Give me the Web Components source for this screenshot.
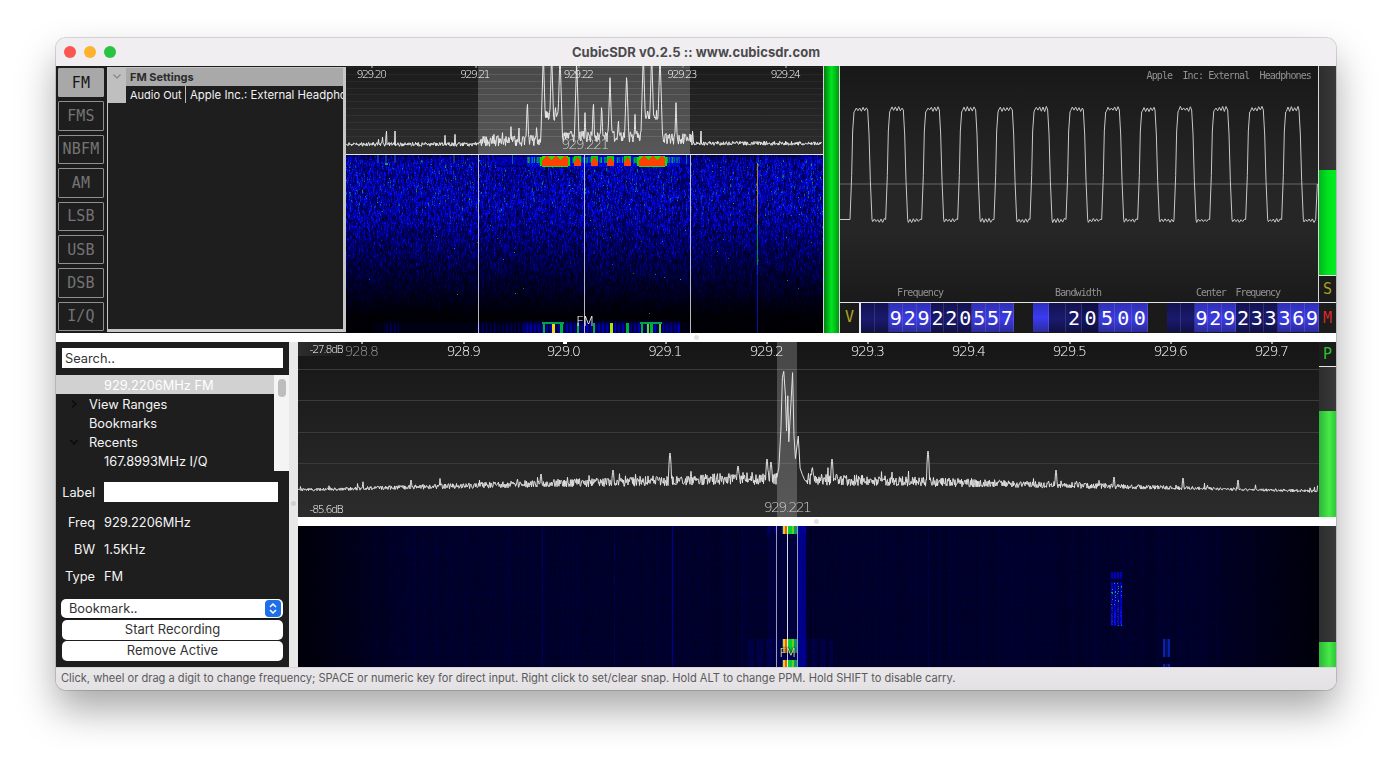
<!DOCTYPE html>
<html lang="en"><head><meta charset="utf-8"><title>CubicSDR</title>
<style>
html,body{margin:0;height:100%;background:#fff;overflow:hidden}
body{padding:38px 0 0 56px;box-sizing:border-box;font-family:Inter,"Liberation Sans",sans-serif}
</style></head><body>
<sdr-window>
  <top-row slot="top"></top-row>
  <bottom-row slot="bottom"></bottom-row>
</sdr-window>
<script>
function rng(seed){let s=seed>>>0;return()=>{s=(s+0x6D2B79F5)>>>0;let t=s;t=Math.imul(t^t>>>15,t|1);t^=t+Math.imul(t^t>>>7,t|61);return((t^t>>>14)>>>0)/4294967296}}
const GL='"DejaVu Sans",sans-serif',MONO='"DejaVu Sans Mono",monospace',UI='Inter,"Liberation Sans",sans-serif';
class Base extends HTMLElement{
  constructor(){super();this.attachShadow({mode:'open'})}
  html(s){this.shadowRoot.innerHTML=s}
}
class SdrWindow extends Base{connectedCallback(){this.html(`<style>
:host{display:flex;flex-direction:column;width:1280px;height:652px;border-radius:10px;overflow:hidden;background:#fff;
box-shadow:0 0 0 1px rgba(0,0,0,.14),0 20px 38px rgba(0,0,0,.34)}
.t{flex:0 0 28px;background:#f0eef1;position:relative;display:flex;align-items:center;justify-content:center;color:#4b4a4d;font:700 13px ${UI};letter-spacing:.06px}
.l{position:absolute;left:8px;top:8px;display:flex;gap:8px}
.l i{width:12px;height:12px;border-radius:50%;display:block}
.s{flex:0 0 9px;background:#fff;display:flex;align-items:center;justify-content:center}
.s i{width:5px;height:5px;border-radius:50%;background:#e2e2e2;display:block}
.st{flex:0 0 23px;background:linear-gradient(#e9e7e9,#e3e1e3);color:#5b5a5c;font:400 11.080px/22px ${UI};padding-left:5px;white-space:nowrap;box-shadow:inset 0 1px 0 #d8d6d8}
</style>
<div class="t"><div class="l"><i style="background:#fc5450"></i><i style="background:#fdb32e"></i><i style="background:#28c33f"></i></div>CubicSDR v0.2.5 :: www.cubicsdr.com</div>
<slot name="top"></slot><div class="s"><i></i></div><slot name="bottom"></slot>
<div class="st">Click, wheel or drag a digit to change frequency; SPACE or numeric key for direct input. Right click to set/clear snap. Hold ALT to change PPM. Hold SHIFT to disable carry.</div>`)}}
class TopRow extends Base{connectedCallback(){this.html(`<style>
:host{display:grid;grid-template-columns:51px 239px 477px 17px 479px 17px;height:267px;background:#1c1c1c}
.m{display:flex;flex-direction:column;padding:2px 3px 2px 2px;gap:4px;background:#1c1c1c}
.d{display:flex;flex-direction:column;min-width:0}
.d .sep{height:1px;background:#e6e6e6;flex:none}
.sc{display:flex;flex-direction:column;min-width:0}
</style>
<div class="m">${['FM','FMS','NBFM','AM','LSB','USB','DSB','I/Q'].map((m,i)=>`<mode-button ${i?'':'active'}>${m}</mode-button>`).join('')}</div>
<settings-panel></settings-panel>
<div class="d"><spectrum-view variant="demod"></spectrum-view><div class="sep"></div><waterfall-view variant="demod"></waterfall-view></div>
<level-meter kind="big"></level-meter>
<div class="sc"><scope-view></scope-view><tuner-row></tuner-row></div>
<side-col></side-col>`)}}
class ModeButton extends Base{connectedCallback(){const a=this.hasAttribute('active');this.html(`<style>
:host{display:flex;flex:1 1 0;min-height:0;align-items:center;justify-content:center;box-sizing:border-box;border:1px solid ${a?'#a8a8a8':'#8f8f8f'};
background:${a?'#a8a8a8':'#1e1e1e'};color:${a?'#161616':'#747474'};font:15px ${MONO};letter-spacing:.2px;border-radius:1px;white-space:nowrap}
</style><slot></slot>`)}}
class SettingsPanel extends Base{connectedCallback(){this.html(`<style>
:host{display:flex;flex-direction:column;background:#1e1e1e;border:1px solid #c6c6c6;border-right-width:3px;border-bottom-width:3px;margin:1px 0;box-sizing:border-box;font:11px ${UI};overflow:hidden}
.h{display:grid;grid-template-columns:18px 1fr;grid-template-rows:18px 17px;background:#bfbfbf}
.c{grid-row:1/3;display:flex;justify-content:center;padding-top:5px;box-sizing:border-box}
.ti{background:#a9a9a9;color:#2c2c2c;font-weight:700;padding-left:4px;line-height:18px}
.r{display:flex;background:#1e1e1e;color:#f2f2f2;line-height:18px;white-space:nowrap;overflow:hidden}
.k{padding:0 3px 0 4px;border-right:1px solid #bbb;width:52px;flex:none}
.v{padding-left:4px;font-size:11.400px}
.b{flex:1}
</style><div class="h"><div class="c"><svg width="10" height="7" viewBox="0 0 10 7"><path d="M1.500 1.500 5 5l3.500-3.500" fill="none" stroke="#8a8a8a" stroke-width="1.400"/></svg></div><div class="ti">FM Settings</div><div class="r"><div class="k">Audio Out</div><div class="v">Apple Inc.: External Headphones</div></div></div><div class="b"></div>`)}}
function demodFloor(px){return px<400?235:px<590?225:px<650?150:px<890?212:px<950?150:px<1040?218:232}
const demodSpikes=[[124,180],[112,198],[150,195],[100,205],[330,205],[300,208],[447,205],[472,185],[498,182],[522,186],[547,100],[575,170],[595,-40],[620,-40],[645,-40],[632,110],[695,-20],[720,140],[745,100],[770,110],[795,35],[820,150],[845,20],[870,145],[895,-40],[920,-40],[945,-40],[908,120],[993,110],[1043,180],[1068,195],[1235,215]];
const mainSpikes=[[411,480,1],[541,474,1],[613,470,1],[670,453,.8],[738,466,1.200],[767,459,.8],[771,462,1],[832,459,.8],[928,451,.7],[1056,470,.8],[1114,477,1],[1183,478,1],[1238,480,1]];
const mainPeak=[[776.700,478],[779,467],[781,432],[782.300,378],[784,372],[785.300,395],[786.300,432],[787.700,395],[789,442],[790.700,402],[792.700,372],[794,435],[795.700,458],[798.300,437],[800,468],[802.300,475],[804.500,480],[807,482]];
class SpectrumView extends Base{connectedCallback(){const demod=this.getAttribute('variant')=='demod';
 const w=demod?477:1021,h=demod?88:175;
 const labels=demod?[['929.20',25],['929.21',128.500],['929.22',232],['929.23',335.500],['929.24',439]]:[['928.8',63],['928.9',165],['929.0',265],['929.1',366.500],['929.2',468],['929.3',569],['929.4',670],['929.5',771],['929.6',872],['929.7',973]];
 this.html(`<style>
:host{display:block;position:relative;width:${w}px;height:${h}px;flex:none;overflow:hidden;background:${demod?'linear-gradient(#1b1b1b,#2e2e2e)':'linear-gradient(#161616,#2c2c2c)'}}
canvas{position:absolute;left:0;top:0}
.l{position:absolute;transform:translateX(-50%);font-family:${GL};font-weight:200;white-space:nowrap;color:#fff}
.t{font-size:${demod?11:14}px;letter-spacing:${demod?-1.6:-1.4}px;top:${demod?3:1}px;line-height:${demod?12:17}px}
.u{font-size:14px;letter-spacing:-1.600px;color:#cfcfcf;line-height:16px}
.d{font-size:11px;letter-spacing:-1.400px;left:28px;line-height:12px;color:#fff}
.box{position:absolute;left:0;top:0;width:48px;height:14px;background:linear-gradient(90deg,#2d2d2d,#1a1a1a)}
</style><canvas width="${w}" height="${h}"></canvas>
${demod?'':'<div class="box"></div>'}
${labels.map((l,i)=>`<div class="l t" style="left:${l[1]}px${(!demod&&i==0)?';color:#9a9a9a':''}">${l[0]}</div>`).join('')}
<div class="l u" style="left:${demod?238.500:489}px;top:${demod?70:157}px">929.221</div>
${demod?'':'<div class="l d" style="top:2px">-27.8dB</div><div class="l d" style="top:162px">-85.6dB</div>'}`);
 const c=this.shadowRoot.querySelector('canvas').getContext('2d');const R=rng(demod?11:29);
 if(demod){
   c.fillStyle='rgba(255,255,255,.05)';for(let y=1;y<75;y+=6.85)c.fillRect(0,Math.round(y),w,1);
   c.fillStyle='rgba(255,255,255,.2)';c.fillRect(132,0,212,h);
   c.fillStyle='rgba(255,255,255,.06)';for(let y=1;y<75;y+=6.85)c.fillRect(132,Math.round(y),212,1);
   c.fillStyle='#777';labels.forEach(l=>c.fillRect(Math.round(l[1]),0,2,2));
   c.strokeStyle='#e8e8e8';c.lineWidth=1;c.beginPath();
   for(let x=0;x<w-1;x+=.5){const px=(x+1)*3;const f=demodFloor(px);const inb=px>400&&px<1040;
     let y=f+(R()-.5)*(inb?34:12);
     for(const s of demodSpikes){const dx=Math.abs(px-s[0]);const sy=s[1]+dx*(s[1]<0?34:30);if(sy<y)y=sy}
     y=y/3;x==0?c.moveTo(x,y):c.lineTo(x,y)}
   c.stroke();
 } else {
   c.fillStyle='#3a3a3a';[26.500,58,89.500,121].forEach(y=>c.fillRect(0,Math.round(y),w,1));
   c.fillStyle='rgba(255,255,255,.21)';c.fillRect(479,0,20,h);
   c.fillStyle='#999';labels.forEach(l=>c.fillRect(Math.round(l[1]),0,2,2));
   c.fillStyle='#fff';c.fillRect(265,0,4,2);
   const floor=x=>{const X=x+298;if(X<762)return 490-12*((X-298)/464);return 478+(X-762)*(13/548)};
   const Q=rng(29);c.strokeStyle='rgb(226,226,226)';c.lineWidth=1;c.beginPath();let started=false;
   for(let x=0;x<w-1;x+=.5){const X=x+298;
     if(X>776.700&&X<807){if(X-.5<=776.700){for(const p of mainPeak){c.lineTo(p[0]-298+(Q()-.5)*.6,p[1]-342+(Q()-.5)*2)}}continue}
     const t=Math.max(0,1-Math.abs(X-770)/440);const a=3+10*t;
     let y=floor(x)-342+(Q()-.5)*a;
     if(Q()<.03)y-=2+Q()*(3+6*t);
     for(const s of mainSpikes){const dx=Math.abs(X-s[0]);const sy=s[1]-342+dx*dx*9/s[2];if(sy<y)y=sy}
     if(X>807&&X<815){const sy=124+Math.abs(X-812.300)*8;if(sy<y)y=sy}
     if(!started){c.moveTo(x,y);started=true}else c.lineTo(x,y)}
   c.stroke();
 }
}}
function palette(v){v=Math.max(0,Math.min(1,v));if(v<.3)return[0,0,Math.round(v/.3*255)];if(v<.55){const t=(v-.3)/.25;return[0,Math.round(t*220),Math.round(255*(1-t))]}if(v<.75){const t=(v-.55)/.2;return[Math.round(t*255),220+Math.round(t*20),0]}const t=(v-.75)/.25;return[255,Math.round(240*(1-t)+30*t),0]}
class WaterfallView extends Base{connectedCallback(){const demod=this.getAttribute('variant')=='demod';const w=demod?477:1021,h=demod?178:141;
 this.html(`<style>
:host{display:block;position:relative;width:${w}px;height:${h}px;flex:none;overflow:hidden;background:#000}
canvas{display:block}
.f{position:absolute;transform:translateX(-50%);font-family:${GL};font-weight:200;color:#fff;white-space:nowrap;letter-spacing:-1.500px;font-size:${demod?14:13}px;line-height:14px;text-shadow:${demod?'none':'0 0 1px #000,0 0 2px #000,0 0 3px #000'}}
</style><canvas width="${w}" height="${h}"></canvas><div class="f" style="left:${demod?238.500:489}px;top:${demod?159:120}px">FM</div>`);
 const c=this.shadowRoot.querySelector('canvas').getContext('2d');const id=c.createImageData(w,h),D=id.data,R=rng(demod?77:5);
 if(demod){
   const grid=[];for(let y=0;y<h+4;y++){grid[y]=[];for(let x=0;x<w;x++)grid[y][x]=R()}
   const col=[];for(let x=0;x<w;x++)col[x]=.92+R()*.16;
   for(let y=0;y<h;y++)for(let x=0;x<w;x++){
     const ph=(x*7)%5;
     const a=grid[(y+ph)>>2][x],b=grid[((y+1)>>1)+2][(x+1)%w],e=grid[y][x];
     const fade=y<6?.6+y*.07:y<50?1:Math.max(.03,Math.pow(Math.max(0,1-(y-50)/118),1.2));
     const n=(a*.5+b*.25+e*.25)*col[x];
     let v=fade*(.05+.3*n*n*1.3+.06*n);let rgb=palette(v);
     if(rgb[2]>150&&R()<.3)rgb=[12,12,rgb[2]];
     if(R()<.0016*fade&&y>8){rgb=[0,120+R()*70,70]}
     const i=(y*w+x)*4;D[i]=rgb[0];D[i+1]=rgb[1];D[i+2]=rgb[2];D[i+3]=255}
   c.putImageData(id,0,0);
   // top signal band
   const blocks=[[196,221],[293,318]],teeth=[231,248,264,281];
   const cs=[];for(let x=0;x<w;x++)cs[x]=R();
   for(let x=150;x<345;x++){for(let y=0;y<12;y++){
     let v;
     if(x<181||x>333){v=(R()<.5?.12:.2)+R()*.08;if(y<2||y>9)v*=.6;if((x==166||x==340)&&y<9)v=.42}
     else{
       v=.24+.24*cs[x]+R()*.05; if(y<2)v=.14+R()*.12; if(y>=8)v=Math.min(v,.2+R()*.16);
       for(const b of blocks){if(x>=b[0]&&x<=b[1]){const tooth=Math.abs(((x-b[0])%9)-4.5);if(y>=.5+tooth*.9&&y<11)v=.96;else if(y>=1)v=.58}else if(x>=b[0]-2&&x<=b[1]+2&&y<11&&y>1)v=.56}
       for(const p of teeth){const d=Math.abs(x-p);if(y>=2&&d<=Math.min(3,(y-1)/2)&&y<11)v=.96;else if(d<=3&&y<11&&y>=1&&v<.54)v=.54}
     }
     const q=palette(v);c.fillStyle=`rgb(${q})`;c.fillRect(x,y,1,1)}}
   // faint peak top left
   for(const x of[32,40,49,108]){c.fillStyle='#0a32a0';c.fillRect(x-1,0,2,8)}
   c.fillStyle='#09a05a';c.fillRect(39,8,3,2);
   // tone line
   for(let y=8;y<120;y++){const q=y<70?(R()<.5?[235,120,0]:[110,160,0]):y<110?[0,140,60]:[0,40,170];c.fillStyle=`rgb(${q})`;c.fillRect(411,y,1,1)}
   c.fillStyle='#0610a8';c.fillRect(411,0,1,8);c.fillRect(411,120,1,58);
   // bottom signal
   for(let x=28;x<345;x++){const st=(x%4<2?1:.4)*(R()*.7+.4);for(let y=165;y<178;y++){const inb=x>=178&&x<=333;let f=inb?(.05+.17*st):(((x>=38&&x<=52)||(x>=130&&x<=178))?.13*st:.025);let v=f*Math.min(1,(y-164)/6);const q=palette(v);c.fillStyle=`rgb(${q})`;c.fillRect(x,y,1,1)}}
   for(const [x,p] of [[197,.5],[206,.78],[214,.5],[231,.5],[247,.5],[264,.68],[280,.5],[295,.5],[301,.62],[304,.5],[313,.62]]){c.fillStyle=`rgb(${palette(p)})`;c.fillRect(x,168,x%2?2:3,10)}
   c.fillStyle='rgb(0,160,70)';c.fillRect(196,167,22,2);c.fillRect(294,167,22,2);
   c.fillStyle='rgba(255,255,255,.72)';[132,238,344].forEach(x=>c.fillRect(x,0,1,h));
 } else {
   const env=x=>{const a=Math.min(1,x/110),b=Math.min(1,(w-x)/120);return .22+.78*a*b};
   const col=[];for(let x=0;x<w;x++)col[x]=(.8+R()*.3);
   for(let x=0;x<w;x+=1){if(R()<.025)col[x]*=1.25}
   for(const [x,a] of [[244,2.000],[316,1.900],[374,3.000],[444,1.700],[630,1.700],[117,1.300],[210,1.400]])col[x]=a;
   for(let y=0;y<h;y++){const rowk=.92+R()*.16;for(let x=0;x<w;x++){
     let b=env(x)*col[x]*(.82+R()*.36)*rowk*46;
     const i=(y*w+x)*4;D[i]=0;D[i+1]=0;D[i+2]=Math.min(255,b);D[i+3]=255}}
   c.putImageData(id,0,0);
   c.fillStyle='rgba(0,0,200,.55)';c.fillRect(500,0,8,h);
   c.fillStyle='rgba(0,0,170,.12)';c.fillRect(470,0,38,h);
   for(let y=113;y<141;y++)for(let x=450;x<535;x++){if(R()<.9&&(x%9<6)){c.fillStyle=`rgba(0,0,${130+R()*90|0},.22)`;c.fillRect(x,y,1,1)}}
   for(let y=0;y<8;y++)for(let x=468;x<510;x++){if(x%7<4){c.fillStyle=`rgba(0,0,220,.25)`;c.fillRect(x,y,1,1)}}
   const sig=(Y,H)=>{for(let x=484;x<499;x++){let q;const X=x-484;if(X<1)q=[0,60,170];else if(X<3)q=[255,200,0];else if(X<5)q=[235,100,0];else if(X<10)q=[0,210,50];else if(X<12)q=[110,205,20];else q=[0,150,110];c.fillStyle=`rgb(${q})`;c.fillRect(x,Y,1,H)}};
   sig(0,8);sig(113,14);sig(134,7);
   c.fillStyle='rgb(0,0,90)';c.fillRect(484,127,15,7);
   for(let y=46;y<100;y++)for(let x=813;x<825;x++){if(y>=53&&y<56)continue;let r=R();const e=(x-813)%3;
     let q=e==2?[0,0,60]:(y>80&&y<99&&r<.5)?[10,20,225]:(y>56&&r<.12)?[0,160,110]:[0,0,150+R()*80|0];
     c.fillStyle=`rgb(${q})`;c.fillRect(x,y,1,1)}
   for(const [Y,H] of [[113,18],[138,3]]){c.fillStyle='#0a22a8';c.fillRect(865,Y,2,H);c.fillRect(870,Y,2,H);c.fillStyle='#000f60';c.fillRect(867,Y,3,H)}
   c.fillStyle='rgba(255,255,255,.85)';c.fillRect(489,0,1,h);c.fillStyle='rgba(255,255,255,.6)';c.fillRect(478,0,1,h);c.fillRect(499,0,1,h);
 }
}}
class LevelMeter extends Base{connectedCallback(){const k=this.getAttribute('kind');const top=this.getAttribute('level')||'0';
 const fill=k=='big'?'linear-gradient(90deg,#007f10,#00e41f 50%,#009612)':k=='soft'?'linear-gradient(90deg,#2bb53a,#46ea46 60%,#2fc83c)':'linear-gradient(90deg,#00b51c,#00e21f 50%,#00ee20)';
 this.html(`<style>
:host{display:flex;flex-direction:column;min-height:0;box-sizing:border-box;background:linear-gradient(90deg,#2e2e2e,#383838);${k=='big'?'border-left:1px solid #d5d5d5;border-right:1px solid #d5d5d5;':''}}
.e{flex:0 0 ${top}px}.f{flex:1;background:${fill}}
</style><div class="e"></div><div class="f"></div>`)}}
class ScopeView extends Base{connectedCallback(){const w=479,h=236;this.html(`<style>
:host{display:block;position:relative;flex:none;width:${w}px;height:${h}px;background:linear-gradient(#181818,#262626 48%,#262626 70%,#1a1a1a);overflow:hidden;border-right:1px solid #d8d8d8;box-sizing:border-box}
canvas{position:absolute;left:0;top:0}
.x{position:absolute;font:10px ${MONO};letter-spacing:-.88px;color:#929292;white-space:pre;line-height:12px}
</style><canvas width="${w}" height="${h}"></canvas>
<div class="x" style="right:7px;top:4px">Apple  Inc: External  Headphones</div>
<div class="x" style="left:57px;top:221px">Frequency</div><div class="x" style="left:215px;top:221px">Bandwidth</div><div class="x" style="left:356px;top:221px;letter-spacing:-1.080px">Center  Frequency</div>`);
 const c=this.shadowRoot.querySelector('canvas').getContext('2d');const R=rng(3);
 c.fillStyle='#464646';c.fillRect(0,117,w,2);
 c.strokeStyle='#c9c9c9';c.lineWidth=1;c.beginPath();
 const rises=[65,172,280,388,497,605,713,820,928,1037,1144,1252,1360],falls=[118,225,333,442,552,658,765,873,980,1090,1198,1305,1412];
 const hy=43,ly=154.500;
 let last=30;c.moveTo(0,ly-1);
 const rip=(a,b,y,amp)=>{let s=0;for(let p=a;p<b;p+=5){c.lineTo(p/3,y+(s++%2?-amp:amp)*(.4+R()*.8))}};
 rises.forEach((r,i)=>{const f=falls[i];const rr=r-30,ff=f-30;
   rip(last,rr-5,ly,1.800);
   c.lineTo((rr-5)/3,ly-1);c.lineTo((rr)/3,ly-45);c.lineTo((rr+3)/3,hy+22);c.lineTo((rr+7)/3,hy+3);
   rip(rr+9,ff-6,hy,2.200);
   c.lineTo((ff-5)/3,hy+1);c.lineTo((ff-1)/3,hy+25);c.lineTo((ff+3)/3,ly-40);c.lineTo((ff+8)/3,ly-1);
   last=ff+10});
 rip(last,1430,ly,1.800);c.lineTo(1432/3,118);
 c.stroke();
}}
class TunerRow extends Base{connectedCallback(){
 const cell=(d,cls)=>`<digit-cell ${cls}>${d}</digit-cell>`;
 const grp=(arr)=>arr.map(([d,c])=>cell(d,c)).join('');
 const f=[['','n'],['','n'],['9','b'],['2','b'],['9','b'],['2','n'],['2','n'],['0','n'],['5','b'],['5','b'],['7','b']];
 const bw=[['','h'],['','n'],['2','n'],['0','d'],['5','b'],['0','b'],['0','b']];
 const ce=[['','n'],['','n'],['9','b'],['2','b'],['9','b'],['2','n'],['3','n'],['3','n'],['3','b'],['6','b'],['9','b']];
 this.html(`<style>
:host{display:flex;flex:none;height:31px;border-top:1px solid #e6e6e6;background:#1a1a1a;box-sizing:border-box;font:20px ${MONO};color:#fff}
.v{width:21px;box-sizing:border-box;flex:none;border-right:2px solid #e6e6e6;color:#b0a821;font:15px/29px ${MONO};text-align:center}
.g{display:flex;height:29px}
.f{width:153px;flex:none}.bw{width:115px;flex:none}.gap1{width:19px;flex:none}.gap2{width:19px;flex:none}.ce{flex:1;min-width:0}
.g digit-cell{flex:1 1 0;min-width:0}
</style><div class="v">V</div><div class="g f">${grp(f)}</div><div class="gap1"></div><div class="g bw">${grp(bw)}</div><div class="gap2"></div><div class="g ce">${grp(ce)}</div>`)}}
class DigitCell extends Base{connectedCallback(){
 const a=this.attributes;const bg=a.b?'linear-gradient(#2f2fb4,#3b3be2 55%,#2a2a9a)':a.h?'linear-gradient(#2e2ebe,#3a3af2 50%,#2c2c9c)':a.d?'linear-gradient(#0e0e42,#14145e 55%,#0e0e40)':'linear-gradient(#121250,#1a1a6e 55%,#101048)';
 this.html(`<style>:host{display:flex;align-items:center;justify-content:center;box-sizing:border-box;background:${bg};box-shadow:inset -1px 0 0 rgba(255,255,255,.12);overflow:hidden;color:#fff}</style><slot></slot>`)}}
class SideCol extends Base{connectedCallback(){this.html(`<style>
:host{display:flex;flex-direction:column;background:#1c1c1c}
level-meter{flex:0 0 209px}
.c{display:flex;align-items:center;justify-content:center;font:15px ${MONO};border-top:1px solid #e6e6e6}
</style><level-meter kind="main" level="104"></level-meter><div class="c" style="flex:0 0 27px;color:#a8a020;box-sizing:border-box">S</div><div class="c" style="flex:1;color:#d42a2a">M</div>`)}}
class BottomRow extends Base{connectedCallback(){this.html(`<style>
:host{display:grid;grid-template-columns:233px 9px 1021px 17px;height:325px;background:#fff}
.split{background:#e8e8e8;position:relative}
.split i{position:absolute;left:2px;top:159px;width:5px;height:5px;border-radius:50%;background:#cfcfcf}
.c{display:flex;flex-direction:column}
.hs{flex:0 0 9px;background:#fff;display:flex;align-items:center;justify-content:center;padding-left:16px}
.hs i{width:5px;height:5px;border-radius:50%;background:#e2e2e2}
.r{display:flex;flex-direction:column}
.p{flex:0 0 24px;background:#1c1c1c;color:#2fc02f;font:15px/24px ${MONO};text-align:center;border-bottom:1px solid #e6e6e6}
.pad{flex:0 0 9px;background:#fff}
</style><bookmark-panel></bookmark-panel><div class="split"><i></i></div>
<div class="c"><spectrum-view variant="main"></spectrum-view><div class="hs"><i></i></div><waterfall-view variant="main"></waterfall-view></div>
<div class="r"><div class="p">P</div><level-meter kind="soft" level="44" style="flex:0 0 150px"></level-meter><div class="pad"></div><level-meter kind="soft" level="116" style="flex:1"></level-meter></div>`)}}
class BookmarkPanel extends Base{connectedCallback(){this.html(`<style>
:host{display:flex;flex-direction:column;background:#1e1e1e;color:#f4f4f4;font:12.800px ${UI};min-width:0}
.s{margin:6px 6px 7px 6px;height:20px;background:#fff;color:#333;line-height:22px;padding-left:3px;flex:none}
.tree{display:flex;height:96px;flex:none}
.rows{flex:1;min-width:0}
.row{height:19px;line-height:21px;position:relative;white-space:nowrap}
.sel{background:#d1d1d1;color:#fff}
.a{padding-left:48px}.b{padding-left:33px}
.row svg{position:absolute;left:13px;top:5px}
.sb{width:15px;background:#f4f4f4;flex:none;display:flex;justify-content:center}
.sb i{width:8px;height:18px;margin-top:4px;background:#bdbdbd;border-radius:4px;display:block}
.lab{display:grid;grid-template-columns:39px 174px;gap:0 9px;align-items:center;margin:11px 0 0 0;height:20px;flex:none}
.lab .k,.f .k{text-align:right}
.lab .in{height:20px;background:#fff}
.f{display:grid;grid-template-columns:39px 1fr;gap:0 9px;height:27px;line-height:27px;flex:none}
.sel2{height:19px;margin:9px 6px 2px 5px;flex:none;background:#fff;border-radius:5px;color:#333;display:flex;align-items:center;justify-content:space-between;padding:0 2px 0 8px;box-sizing:border-box;box-shadow:0 .5px 1px rgba(0,0,0,.4)}
.btn{height:20px;margin:0 6px 1px 6px;flex:none;background:#fff;border-radius:5px;color:#333;text-align:center;line-height:19px;font-size:13px}
.st{width:16px;height:17px;background:#1f6fe8;border-radius:4px;display:flex;align-items:center;justify-content:center}
</style>
<div class="s">Search..</div>
<div class="tree"><div class="rows">
<div class="row sel a">929.2206MHz FM</div>
<div class="row b"><svg width="10" height="10" viewBox="0 0 10 10"><path d="M3 1.500 7 5l-4 3.500" fill="none" stroke="#0c0c0c" stroke-width="1.500"/></svg>View Ranges</div>
<div class="row b">Bookmarks</div>
<div class="row b"><svg width="10" height="10" viewBox="0 0 10 10"><path d="M1.500 3 5 7l3.500-4" fill="none" stroke="#0c0c0c" stroke-width="1.500"/></svg>Recents</div>
<div class="row a">167.8993MHz I/Q</div>
</div><div class="sb"><i></i></div></div>
<div class="lab"><div class="k">Label</div><div class="in"></div></div>
<div style="height:7px;flex:none"></div>
<div class="f"><div class="k">Freq</div><div>929.2206MHz</div></div>
<div class="f"><div class="k">BW</div><div>1.5KHz</div></div>
<div class="f"><div class="k">Type</div><div>FM</div></div>
<div class="sel2"><span>Bookmark..</span><span class="st"><svg width="10" height="13" viewBox="0 0 10 13"><path d="M2 5 5 2l3 3M2 8l3 3 3-3" fill="none" stroke="#fff" stroke-width="1.500"/></svg></span></div>
<div class="btn">Start Recording</div>
<div class="btn">Remove Active</div>`)}}
const defs={'sdr-window':SdrWindow,'top-row':TopRow,'mode-button':ModeButton,'settings-panel':SettingsPanel,'spectrum-view':SpectrumView,'waterfall-view':WaterfallView,'level-meter':LevelMeter,'scope-view':ScopeView,'tuner-row':TunerRow,'digit-cell':DigitCell,'side-col':SideCol,'bottom-row':BottomRow,'bookmark-panel':BookmarkPanel};
for(const k in defs)customElements.define(k,defs[k]);
</script>
</body></html>
